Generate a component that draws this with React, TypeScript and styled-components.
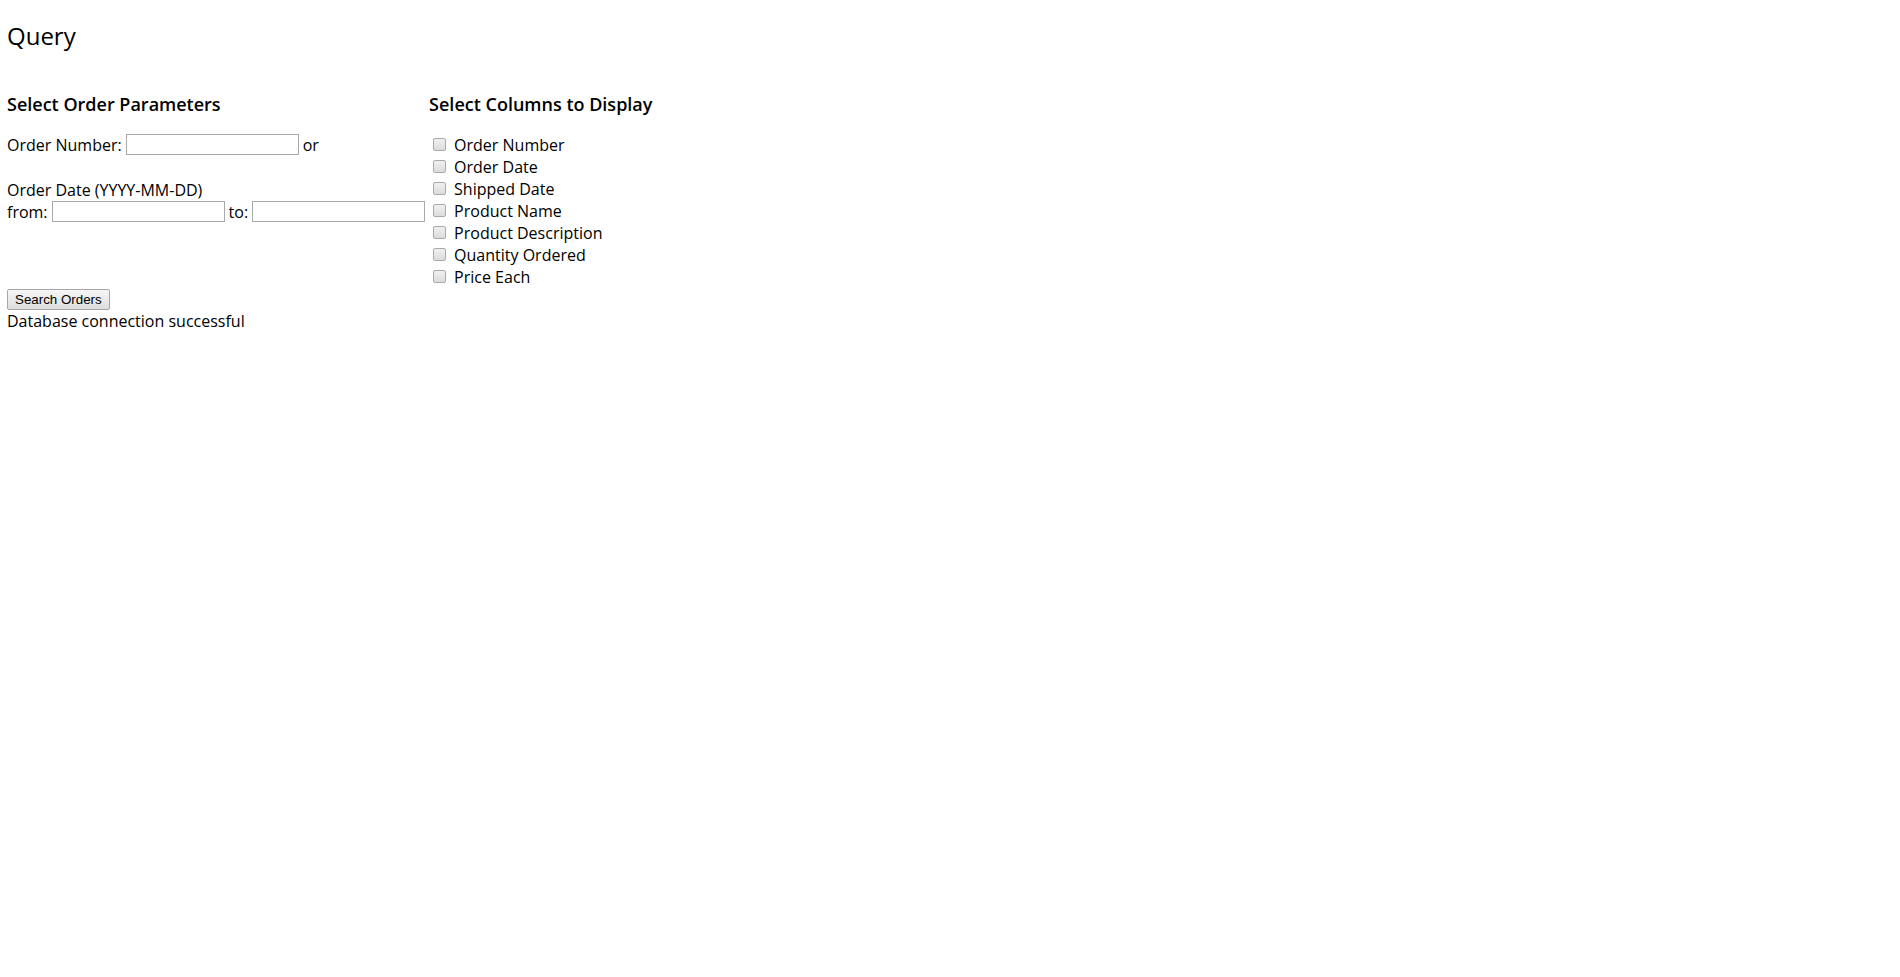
import React from "react";
import styled, { createGlobalStyle } from "styled-components";

const GlobalStyle = createGlobalStyle`
  html, body {
    margin: 0;
    padding: 0;
    background: #ffffff;
  }
  body {
    font-family: "Open Sans", "Liberation Sans", Arial, sans-serif;
    font-size: 16px;
    color: #000000;
  }
`;

const Page = styled.div`
  padding: 19px 7px 0 7px;
`;

const Title = styled.h2`
  margin: 0 0 19.92px 0;
  font-size: 24px;
  font-weight: 400;
  line-height: normal;
`;

const Columns = styled.div`
  display: flex;
  align-items: flex-start;
  gap: 4px;
`;

const Column = styled.div`
  display: flex;
  flex-direction: column;
`;

const SectionTitle = styled.h3`
  margin: 19.8px 0 16.4px 0;
  font-size: 18px;
  font-weight: 600;
  line-height: 25.5px;
`;

const Line = styled.div<{ $spaceAfter?: boolean }>`
  display: flex;
  align-items: baseline;
  line-height: normal;
  min-height: 21.8px;
  white-space: pre;
  margin-bottom: ${(p) => (p.$spaceAfter ? "23.2px" : "0")};
`;

const TextInput = styled.input`
  box-sizing: border-box;
  width: 173px;
  height: 21px;
  margin: 0 4px;
  padding: 1px 2px;
  border: 1px solid #a9a9a9;
  border-radius: 0;
  background: #ffffff;
  font-family: Arial, "Liberation Sans", sans-serif;
  font-size: 13.33px;
  outline: none;
  align-self: center;
`;

const CheckRow = styled.label`
  display: flex;
  align-items: center;
  height: 22px;
  line-height: normal;
`;

const CheckBox = styled.input`
  appearance: none;
  box-sizing: border-box;
  width: 13px;
  height: 13px;
  margin: 0 8px 0 4px;
  border: 1px solid #a9a9a9;
  border-radius: 2px;
  background: linear-gradient(#f0f0f0, #dcdcdc);
`;

const Footer = styled.div`
  display: flex;
  flex-direction: column;
  align-items: flex-start;
  padding-top: 1.8px;
`;

const Button = styled.button`
  box-sizing: border-box;
  height: 21px;
  padding: 0 7px;
  border: 1px solid #a6a6a6;
  border-radius: 2px;
  background: linear-gradient(#f6f6f6, #dedede);
  font-family: Arial, "Liberation Sans", sans-serif;
  font-size: 13.33px;
  color: #000000;
  line-height: 19px;
`;

const Status = styled.div`
  line-height: normal;
`;

const columns = [
  "Order Number",
  "Order Date",
  "Shipped Date",
  "Product Name",
  "Product Description",
  "Quantity Ordered",
  "Price Each",
];

export default function App() {
  return (
    <>
      <GlobalStyle />
      <Page>
        <Title>Query</Title>
        <Columns>
          <Column>
            <SectionTitle>Select Order Parameters</SectionTitle>
            <Line $spaceAfter>
              Order Number:<TextInput type="text" />or
            </Line>
            <Line>Order Date (YYYY-MM-DD)</Line>
            <Line>
              from:<TextInput type="text" />to:<TextInput type="text" style={{ marginRight: 0 }} />
            </Line>
          </Column>
          <Column>
            <SectionTitle>Select Columns to Display</SectionTitle>
            {columns.map((c) => (
              <CheckRow key={c}>
                <CheckBox type="checkbox" />
                {c}
              </CheckRow>
            ))}
          </Column>
        </Columns>
        <Footer>
          <Button type="button">Search Orders</Button>
          <Status>Database connection successful</Status>
        </Footer>
      </Page>
    </>
  );
}
